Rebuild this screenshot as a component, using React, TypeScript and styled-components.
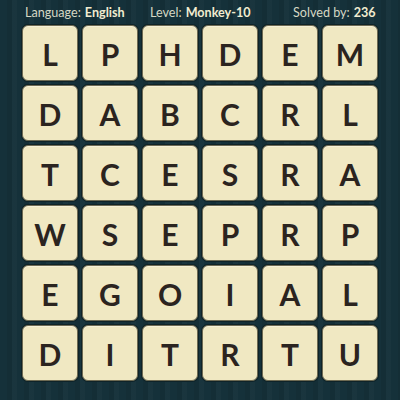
import React from "react";
import styled, { createGlobalStyle } from "styled-components";

const Global = createGlobalStyle`
  html, body { margin: 0; padding: 0; }
  body {
    width: 400px;
    height: 400px;
    overflow: hidden;
    background-color: #15313a;
    background-image: repeating-linear-gradient(
      90deg,
      rgba(255,255,255,0.00) 0px,
      rgba(255,255,255,0.00) 7px,
      rgba(0,0,0,0.07) 7px,
      rgba(0,0,0,0.07) 12px,
      rgba(255,255,255,0.02) 12px,
      rgba(255,255,255,0.02) 17px
    );
  }
`;

const Page = styled.div`
  width: 400px;
  height: 400px;
  display: flex;
  flex-direction: column;
`;

const Header = styled.div`
  height: 24px;
  display: grid;
  grid-template-columns: 125px 143px auto;
  align-items: center;
  padding-left: 25px;
  font-family: "Lato", "Open Sans", sans-serif;
  font-size: 12.6px;
  color: #d5d8c4;
  box-sizing: border-box;
`;

const Item = styled.div`
  white-space: nowrap;
`;

const Value = styled.span`
  font-weight: 700;
  color: #f1ecd0;
  margin-left: 4px;
`;

const Grid = styled.div`
  margin-top: 1px;
  margin-left: 22px;
  display: grid;
  grid-template-columns: repeat(6, 56px);
  grid-auto-rows: 56px;
  gap: 4px;
`;

const Tile = styled.div`
  background: #f0e8c2;
  border-radius: 6px;
  border: 1px solid #6e6a52;
  box-shadow: 0 0 0 1px #0f2328, inset 0 1px 0 rgba(255,255,255,0.35);
  box-sizing: border-box;
  display: flex;
  align-items: center;
  justify-content: center;
  font-family: "Lato", "Open Sans", sans-serif;
  font-weight: 700;
  font-size: 30px;
  color: #2b241f;
  padding-top: 1px;
`;

const rows = [
  "LPHDEM",
  "DABCRL",
  "TCESRA",
  "WSEPRP",
  "EGOIAL",
  "DITRTU",
];

export default function App() {
  return (
    <Page>
      <Global />
      <Header>
        <Item>
          Language:<Value>English</Value>
        </Item>
        <Item>
          Level:<Value>Monkey-10</Value>
        </Item>
        <Item>
          Solved by:<Value>236</Value>
        </Item>
      </Header>
      <Grid>
        {rows.flatMap((r, i) =>
          r.split("").map((c, j) => <Tile key={`${i}-${j}`}>{c}</Tile>)
        )}
      </Grid>
    </Page>
  );
}
